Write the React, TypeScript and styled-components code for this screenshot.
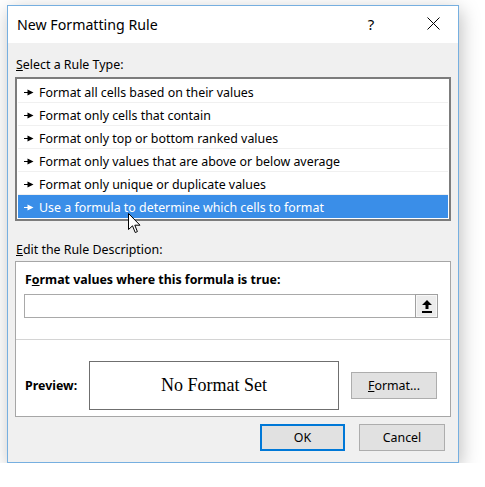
import React from 'react'
import styled, { createGlobalStyle } from 'styled-components'

const GlobalStyle = createGlobalStyle`
    html, body {
        margin: 0;
        padding: 0;
        background: #ffffff;
    }
    body {
        font-family: "Noto Sans", "Open Sans", sans-serif;
        font-size: 12.4px;
        color: #000;
    }
`

const rules = [
    'Format all cells based on their values',
    'Format only cells that contain',
    'Format only top or bottom ranked values',
    'Format only values that are above or below average',
    'Format only unique or duplicate values',
    'Use a formula to determine which cells to format',
]

function RuleArrow() {
    return (
        <svg width="10" height="7" viewBox="0 0 10 7">
            <rect x="0" y="3" width="4" height="1" fill="currentColor" />
            <polygon points="3.5,0.5 9.5,3.5 3.5,6.5" fill="currentColor" />
        </svg>
    )
}

function CloseIcon() {
    return (
        <svg width="13" height="13" viewBox="0 0 13 13">
            <path d="M0.5 0.5 L12.5 12.5 M12.5 0.5 L0.5 12.5" stroke="#000" strokeWidth="1" />
        </svg>
    )
}

function UploadIcon() {
    return (
        <svg width="10" height="13" viewBox="0 0 10 13">
            <polygon points="5,0 10,5 6.5,5 6.5,9 3.5,9 3.5,5 0,5" fill="#000" />
            <rect x="0" y="11" width="10" height="2" fill="#000" />
        </svg>
    )
}

function Cursor() {
    return (
        <CursorWrap>
            <svg width="13" height="21" viewBox="0 0 13 21">
                <path
                    d="M0.5 0.5 L0.5 16.5 L4.5 12.8 L7.2 19.5 L9.4 18.6 L6.8 12.2 L12 12.2 Z"
                    fill="#fff"
                    stroke="#000"
                    strokeWidth="1"
                    strokeLinejoin="miter"
                />
            </svg>
        </CursorWrap>
    )
}

export default function App() {
    return (
        <>
            <GlobalStyle />
            <Window>
                <TitleBar>
                    <TitleText>New Formatting Rule</TitleText>
                    <HelpButton>?</HelpButton>
                    <CloseButton><CloseIcon /></CloseButton>
                </TitleBar>
                <Body>
                    <SectionLabel><u>S</u>elect a Rule Type:</SectionLabel>
                    <ListBox>
                        {rules.map((r, i) => (
                            <RuleRow key={r} selected={i === rules.length - 1}>
                                <RuleArrow />
                                <span>{r}</span>
                            </RuleRow>
                        ))}
                    </ListBox>
                    <DescLabel><u>E</u>dit the Rule Description:</DescLabel>
                    <DescPanel>
                        <FormulaSection>
                            <BoldLabel>F<u>o</u>rmat values where this formula is true:</BoldLabel>
                            <FormulaInput>
                                <InputField />
                                <CollapseButton><UploadIcon /></CollapseButton>
                            </FormulaInput>
                        </FormulaSection>
                        <PreviewRow>
                            <PreviewLabel>Preview:</PreviewLabel>
                            <PreviewBox>No Format Set</PreviewBox>
                            <DialogButton width={86}><u>F</u>ormat...</DialogButton>
                        </PreviewRow>
                    </DescPanel>
                </Body>
                <Footer>
                    <DialogButton width={85} primary>OK</DialogButton>
                    <DialogButton width={86}>Cancel</DialogButton>
                </Footer>
                <Cursor />
            </Window>
        </>
    )
}

const Window = styled.div`
    position: relative;
    margin: 5px 0 0 7px;
    width: 450px;
    background: #f0f0f0;
    border: 1px solid #76afe0;
    box-shadow: 2px 5px 18px rgba(0, 0, 0, 0.26);
    display: flex;
    flex-direction: column;
`

const TitleBar = styled.div`
    height: 37px;
    background: #ffffff;
    display: flex;
    align-items: center;
    padding-left: 9px;
    font-size: 14.2px;
`

const TitleText = styled.div`
    flex: 1;
    padding-bottom: 1px;
`

const HelpButton = styled.div`
    width: 30px;
    text-align: center;
    font-size: 15px;
    margin-right: 24px;
    padding-bottom: 1px;
`

const CloseButton = styled.div`
    width: 46px;
    height: 37px;
    display: flex;
    align-items: center;
    justify-content: center;
    margin-right: 2px;
    padding-bottom: 2px;
    box-sizing: border-box;
`

const Body = styled.div`
    padding: 14px 7px 0 7px;
    display: flex;
    flex-direction: column;
`

const SectionLabel = styled.div`
    line-height: 16px;
    margin-bottom: 4px;
    padding-left: 1px;
`

const DescLabel = styled(SectionLabel)`
    margin-top: 21px;
    margin-bottom: 3px;
`

const ListBox = styled.div`
    background: #ffffff;
    border: 2px solid #7c7c7c;
    padding: 1px;
`

const RuleRow = styled.div<{ selected?: boolean }>`
    height: 23px;
    box-sizing: border-box;
    display: flex;
    align-items: center;
    gap: 5px;
    padding: 3px 0 0 6px;
    border-bottom: 1px solid ${p => (p.selected ? '#3a8ee8' : '#f0f0f0')};
    background: ${p => (p.selected ? '#3a8ee8' : 'transparent')};
    color: ${p => (p.selected ? '#ffffff' : '#000000')};
    white-space: nowrap;
`

const DescPanel = styled.div`
    background: #ffffff;
    border: 1px solid #a6a6a6;
    display: flex;
    flex-direction: column;
`

const FormulaSection = styled.div`
    padding: 10px 12px 21px 8px;
    border-bottom: 1px solid #d4d4d4;
`

const BoldLabel = styled.div`
    font-weight: 700;
    line-height: 16px;
    padding-left: 1px;
    margin-bottom: 6px;
`

const FormulaInput = styled.div`
    height: 24px;
    box-sizing: border-box;
    border: 1px solid #a9a9a9;
    display: flex;
`

const InputField = styled.div`
    flex: 1;
`

const CollapseButton = styled.div`
    width: 23px;
    box-sizing: border-box;
    margin: -1px -1px -1px 0;
    background: #ececec;
    border: 1px solid #a0a0a0;
    box-shadow: inset 0 0 0 1px #f8f8f8;
    display: flex;
    align-items: center;
    justify-content: center;
`

const PreviewRow = styled.div`
    display: flex;
    align-items: center;
    padding: 21px 12px 6px 9px;
`

const PreviewLabel = styled.div`
    width: 64px;
    font-weight: 700;
`

const PreviewBox = styled.div`
    width: 250px;
    height: 49px;
    box-sizing: border-box;
    border: 1px solid #6f6f6f;
    display: flex;
    align-items: center;
    justify-content: center;
    font-family: "Liberation Serif", "Times New Roman", serif;
    font-size: 18px;
    margin-right: 12px;
`

const DialogButton = styled.div<{ width: number; primary?: boolean }>`
    width: ${p => p.width}px;
    height: 27px;
    box-sizing: border-box;
    display: flex;
    align-items: center;
    justify-content: center;
    background: #e1e1e1;
    border: ${p => (p.primary ? '2px solid #0078d7' : '1px solid #adadad')};
`

const Footer = styled.div`
    display: flex;
    justify-content: flex-end;
    gap: 14px;
    padding: 7px 13px 11px 0;
`

const CursorWrap = styled.div`
    position: absolute;
    left: 120px;
    top: 207px;
    pointer-events: none;
`
